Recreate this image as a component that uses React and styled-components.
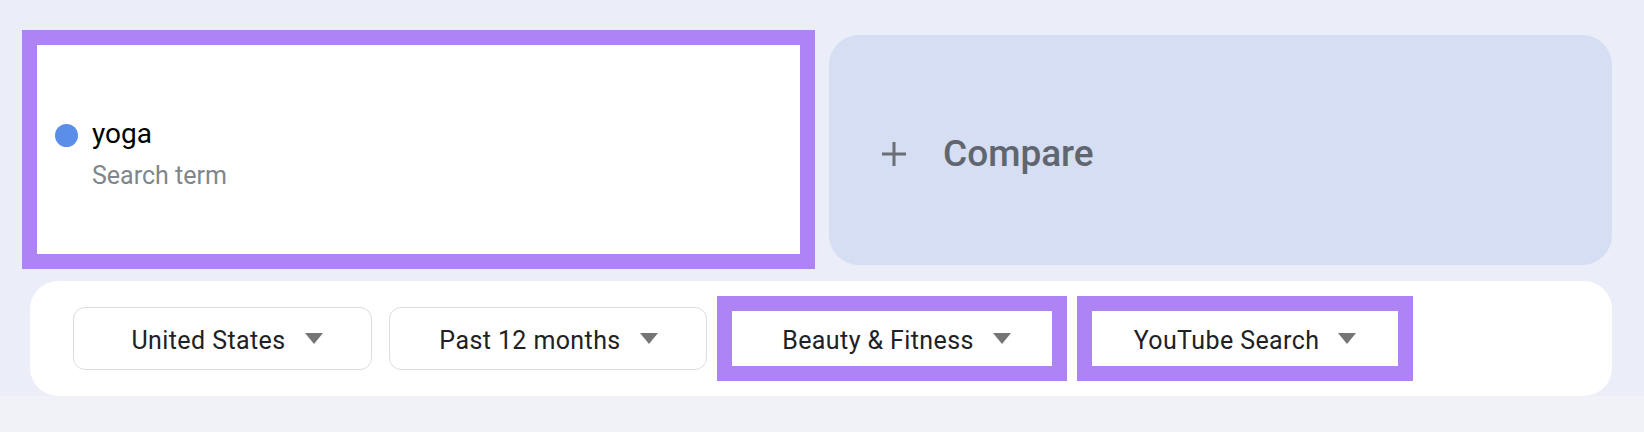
import React from "react";
import styled, { createGlobalStyle } from "styled-components";

const Global = createGlobalStyle`
  html, body { margin: 0; padding: 0; }
  body {
    background: #f1f2f8;
    font-family: Roboto, "Liberation Sans", Arial, sans-serif;
    -webkit-font-smoothing: antialiased;
  }
`;

const Header = styled.header`
  background: #ebeef8;
  padding: 30px 32px 0 22px;
`;

const TopRow = styled.div`
  display: flex;
  align-items: center;
  gap: 14px;
`;

const SearchCard = styled.div`
  box-sizing: border-box;
  width: 793px;
  height: 239px;
  border: 15px solid #ae84f4;
  background: #ffffff;
  padding: 73px 0 0 18px;
  display: flex;
  flex-direction: column;
  gap: 11px;
`;

const TermRow = styled.div`
  display: flex;
  align-items: center;
  gap: 14px;
`;

const Dot = styled.span`
  width: 23px;
  height: 23px;
  border-radius: 50%;
  background: ${(p) => p.$color};
  flex: none;
  margin-top: 3px;
`;

const Term = styled.span`
  font-size: 28px;
  line-height: 32px;
  color: #000000;
`;

const TermLabel = styled.span`
  font-size: 25px;
  line-height: 30px;
  color: #80868b;
  padding-left: 37px;
`;

const ComparePanel = styled.button`
  flex: 1;
  height: 230px;
  border: none;
  border-radius: 30px;
  background: #d5def2;
  display: flex;
  align-items: center;
  gap: 36px;
  padding: 8px 0 0 52px;
  font-family: inherit;
  cursor: pointer;
`;

const CompareLabel = styled.span`
  font-size: 37px;
  font-weight: 500;
  color: #60656f;
`;

const FilterPanel = styled.div`
  margin: 12px 0 0 8px;
  height: 115px;
  box-sizing: border-box;
  background: #ffffff;
  border-radius: 28px;
  padding: 0 43px;
  display: flex;
  align-items: center;
  gap: 17px;
`;

const Dropdown = styled.button`
  box-sizing: border-box;
  width: ${(p) => p.$width}px;
  height: ${(p) => (p.$highlight ? 85 : 63)}px;
  margin-left: ${(p) => (p.$highlight ? -7 : 0)}px;
  border: ${(p) => (p.$highlight ? "15px solid #ae84f4" : "1px solid #dcdde1")};
  border-radius: ${(p) => (p.$highlight ? 0 : 12)}px;
  background: #ffffff;
  display: flex;
  align-items: center;
  justify-content: center;
  gap: 19px;
  padding: 0 0 0 ${(p) => p.$shift || 0}px;
  font-family: inherit;
  font-size: 25px;
  letter-spacing: 0.4px;
  color: #202124;
  cursor: pointer;
`;

const DropdownLabel = styled.span`
  padding-top: 3px;
`;

const Caret = styled.svg`
  flex: none;
  display: block;
`;

const Arrow = () => (
  <Caret width="18" height="11" viewBox="0 0 18 11">
    <path d="M0 0 H18 L9 11 Z" fill="#757575" />
  </Caret>
);

const PlusIcon = () => (
  <svg width="26" height="26" viewBox="0 0 26 26" style={{ flex: "none" }}>
    <path d="M13 1 V25 M1 13 H25" stroke="#6b6e75" strokeWidth="3" />
  </svg>
);

const filters = [
  { label: "United States", width: 299, shift: 9 },
  { label: "Past 12 months", width: 318, shift: 1 },
  { label: "Beauty & Fitness", width: 350, highlight: true, shift: 9 },
  { label: "YouTube Search", width: 336, highlight: true },
];

export default function App() {
  return (
    <>
      <Global />
      <Header>
        <TopRow>
          <SearchCard>
            <TermRow>
              <Dot $color="#5a8ee9" />
              <Term>yoga</Term>
            </TermRow>
            <TermLabel>Search term</TermLabel>
          </SearchCard>
          <ComparePanel>
            <PlusIcon />
            <CompareLabel>Compare</CompareLabel>
          </ComparePanel>
        </TopRow>
        <FilterPanel>
          {filters.map((f) => (
            <Dropdown
              key={f.label}
              $width={f.width}
              $highlight={f.highlight}
              $shift={f.shift}
            >
              <DropdownLabel>{f.label}</DropdownLabel>
              <Arrow />
            </Dropdown>
          ))}
        </FilterPanel>
      </Header>
    </>
  );
}
